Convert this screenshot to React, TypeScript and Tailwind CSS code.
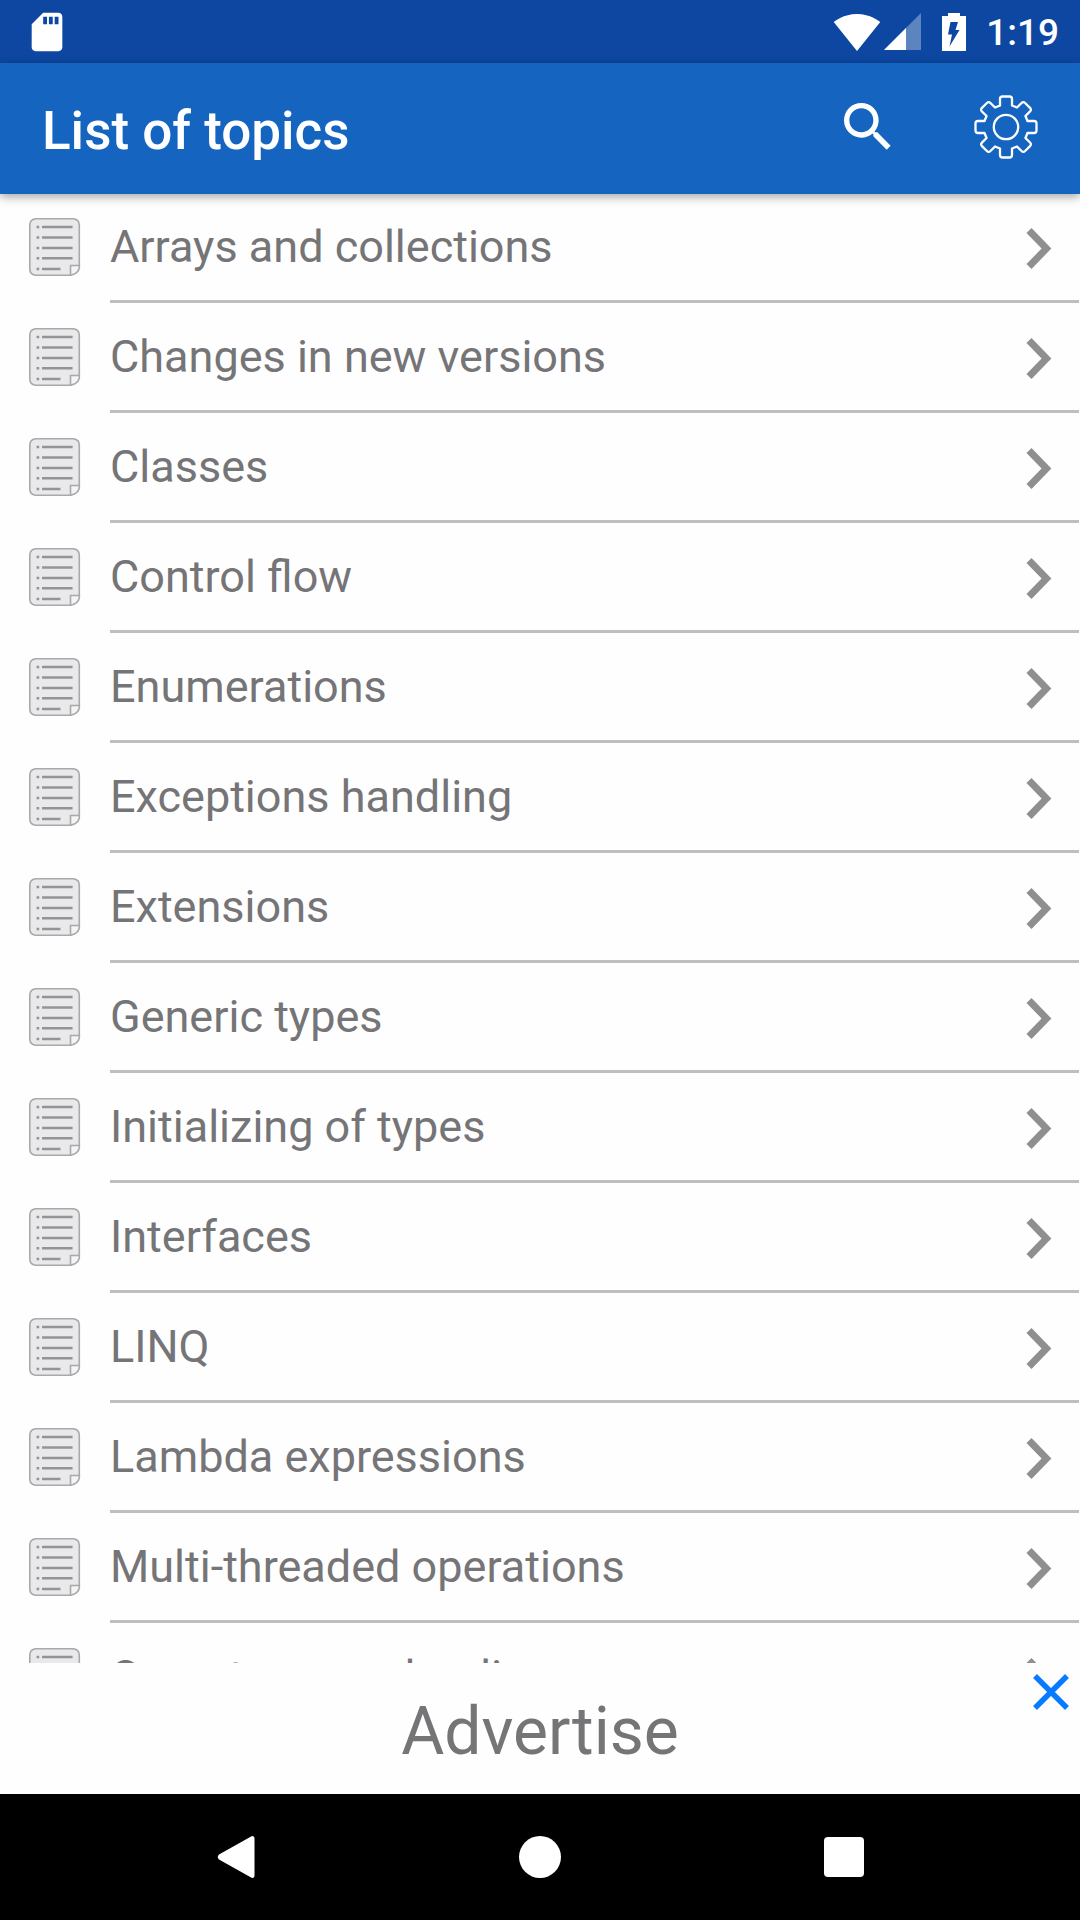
import React, { useState } from 'react'
import { MdSdCard, MdSearch, MdSignalWifi4Bar } from 'react-icons/md'

const topics = [
  'Arrays and collections',
  'Changes in new versions',
  'Classes',
  'Control flow',
  'Enumerations',
  'Exceptions handling',
  'Extensions',
  'Generic types',
  'Initializing of types',
  'Interfaces',
  'LINQ',
  'Lambda expressions',
  'Multi-threaded operations',
  'Operators overloading',
]

// One tooth of the gear points up, the other seven are turned copies of it
function gearPath() {
  const turn = (x: number, y: number, i: number) => {
    const a = (i * Math.PI) / 4
    return `${(x * Math.cos(a) - y * Math.sin(a)).toFixed(2)} ${(x * Math.sin(a) + y * Math.cos(a)).toFixed(2)}`
  }
  let d = ''
  for (let i = 0; i < 8; i++) {
    d += `${i === 0 ? 'M' : 'L'}${turn(-6, -21.5, i)}`
    d += `L${turn(-6, -28, i)}Q${turn(-6, -30.5, i)} ${turn(-3.5, -30.5, i)}`
    d += `L${turn(3.5, -30.5, i)}Q${turn(6, -30.5, i)} ${turn(6, -28, i)}L${turn(6, -21.5, i)}`
  }
  return d + 'Z'
}

function GearIcon() {
  return (
    <svg className="w-16 h-16" viewBox="-32 -32 64 64" fill="none" stroke="#fff" strokeWidth="2.3" strokeLinejoin="round">
      <path d={gearPath()} />
      <circle r="12.2" />
    </svg>
  )
}

function DocumentIcon() {
  return (
    <svg className="w-[52px] h-[58px] mb-[3px] shrink-0" viewBox="0 0 52 58">
      <path
        d="M6.5 .8H44.5Q50.300 1.800 50.300 7V48L41.5 57.200H6.5Q.8 56.500 .8 51V7Q.8 1.800 6.500 .8Z"
        fill="#e9e8ea"
        stroke="#a9a8aa"
        strokeWidth="1.6"
        strokeLinejoin="round"
      />
      <path d="M41.5 57.2V47.5H50.3V50Q49 56 41.5 57.2Z" fill="#f4f4f5" stroke="#a9a8aa" strokeWidth="1.6" />
      <g stroke="#949396" strokeWidth="2.6">
        <path d="M13 9H43.6M13 19.5H43.6M13 30H43.6M13 40.3H43.6M13 51H31.5" />
        <path d="M7.6 9h2.6M7.6 19.5h2.6M7.6 30h2.6M7.6 40.3h2.6M7.6 51h2.6" />
      </g>
    </svg>
  )
}

function StatusBar() {
  return (
    <div className="flex items-center h-[63px] pl-6 pr-[21px] bg-[#0d47a1] text-white shrink-0">
      <MdSdCard className="w-[46px] h-[46px]" />
      <div className="flex items-center ml-auto">
        <MdSignalWifi4Bar className="w-12 h-12" />
        <svg className="w-[37px] h-[37px] ml-[3px]" viewBox="0 0 37 37">
          <path d="M0 37L37 0V37Z" fill="#5c85bf" />
          <path d="M0 37L22 15V37Z" fill="#fff" />
        </svg>
        <svg className="w-6 h-[38px] ml-[21px]" viewBox="0 0 24 38">
          <path d="M0 3H6V0H18V3H24V38H0Z" fill="#fff" />
          <path d="M8.5 9H16L13.5 17H17.5L7.5 33.5L10 21.5H6Z" fill="#0d47a1" />
        </svg>
        <span className="ml-5 pt-[3px] text-[37px] leading-[44px] font-medium">1:19</span>
      </div>
    </div>
  )
}

export default function App() {
  const [adVisible, setAdVisible] = useState(true)

  return (
    <div className="flex flex-col h-screen overflow-hidden bg-[#fefefe] font-['Roboto',sans-serif]">
      <StatusBar />

      <header className="relative z-10 flex items-center h-[131px] px-[42px] bg-[#1565c0] text-white shadow-[0_3px_9px_rgba(0,0,0,0.35)] shrink-0">
        <h1 className="flex-1 pt-1 text-[53px] leading-[60px] font-medium">List of topics</h1>
        <button type="button" aria-label="Search" className="mr-[74px] pb-[3px]">
          <MdSearch className="w-16 h-16" />
        </button>
        <button type="button" aria-label="Settings" className="pb-[3px]">
          <GearIcon />
        </button>
      </header>

      <ul className="flex-1 min-h-0 -mt-px overflow-hidden">
        {topics.map((topic) => (
          <li key={topic}>
            <a href="#" className="flex items-center h-[110px] pl-[29px] pr-px">
              <DocumentIcon />
              <span className="flex flex-1 items-center h-full ml-[29px] pr-[25px] border-b-3 border-[#bfbfc0]">
                <span className="flex-1 text-[45px] leading-[54px] text-[#757477]">{topic}</span>
                <svg className="w-7 h-[46px]" viewBox="0 0 28 46" fill="none" stroke="#8f8e91" strokeWidth="7">
                  <path d="M3 6.5L20.5 24.5L3 42.5" />
                </svg>
              </span>
            </a>
          </li>
        ))}
      </ul>

      {adVisible && (
        <div className="relative flex items-center justify-center h-[131px] shrink-0">
          <p className="pt-[6px] text-[66px] leading-[78px] text-[#757477]">Advertise</p>
          <button
            type="button"
            aria-label="Close"
            onClick={() => setAdVisible(false)}
            className="absolute top-[11px] right-[11px]"
          >
            <svg className="w-9 h-9" viewBox="0 0 36 36" stroke="#067bff" strokeWidth="5.5">
              <path d="M2 2L34 34M34 2L2 34" />
            </svg>
          </button>
        </div>
      )}

      <nav className="flex items-center h-[126px] px-[84px] bg-black shrink-0">
        <button type="button" aria-label="Back" className="flex flex-1 justify-center">
          <svg className="w-[38px] h-[42px]" viewBox="0 0 38 42">
            <path d="M35 0Q37.5 0 37.5 2.5V39.5Q37.5 42 35 42L2 23.5Q-.5 21 2 18.5Z" fill="#fff" />
          </svg>
        </button>
        <button type="button" aria-label="Home" className="flex flex-1 justify-center">
          <span className="w-[42px] h-[42px] rounded-full bg-white" />
        </button>
        <button type="button" aria-label="Recent apps" className="flex flex-1 justify-center">
          <span className="w-10 h-10 rounded-sm bg-white" />
        </button>
      </nav>
    </div>
  )
}
